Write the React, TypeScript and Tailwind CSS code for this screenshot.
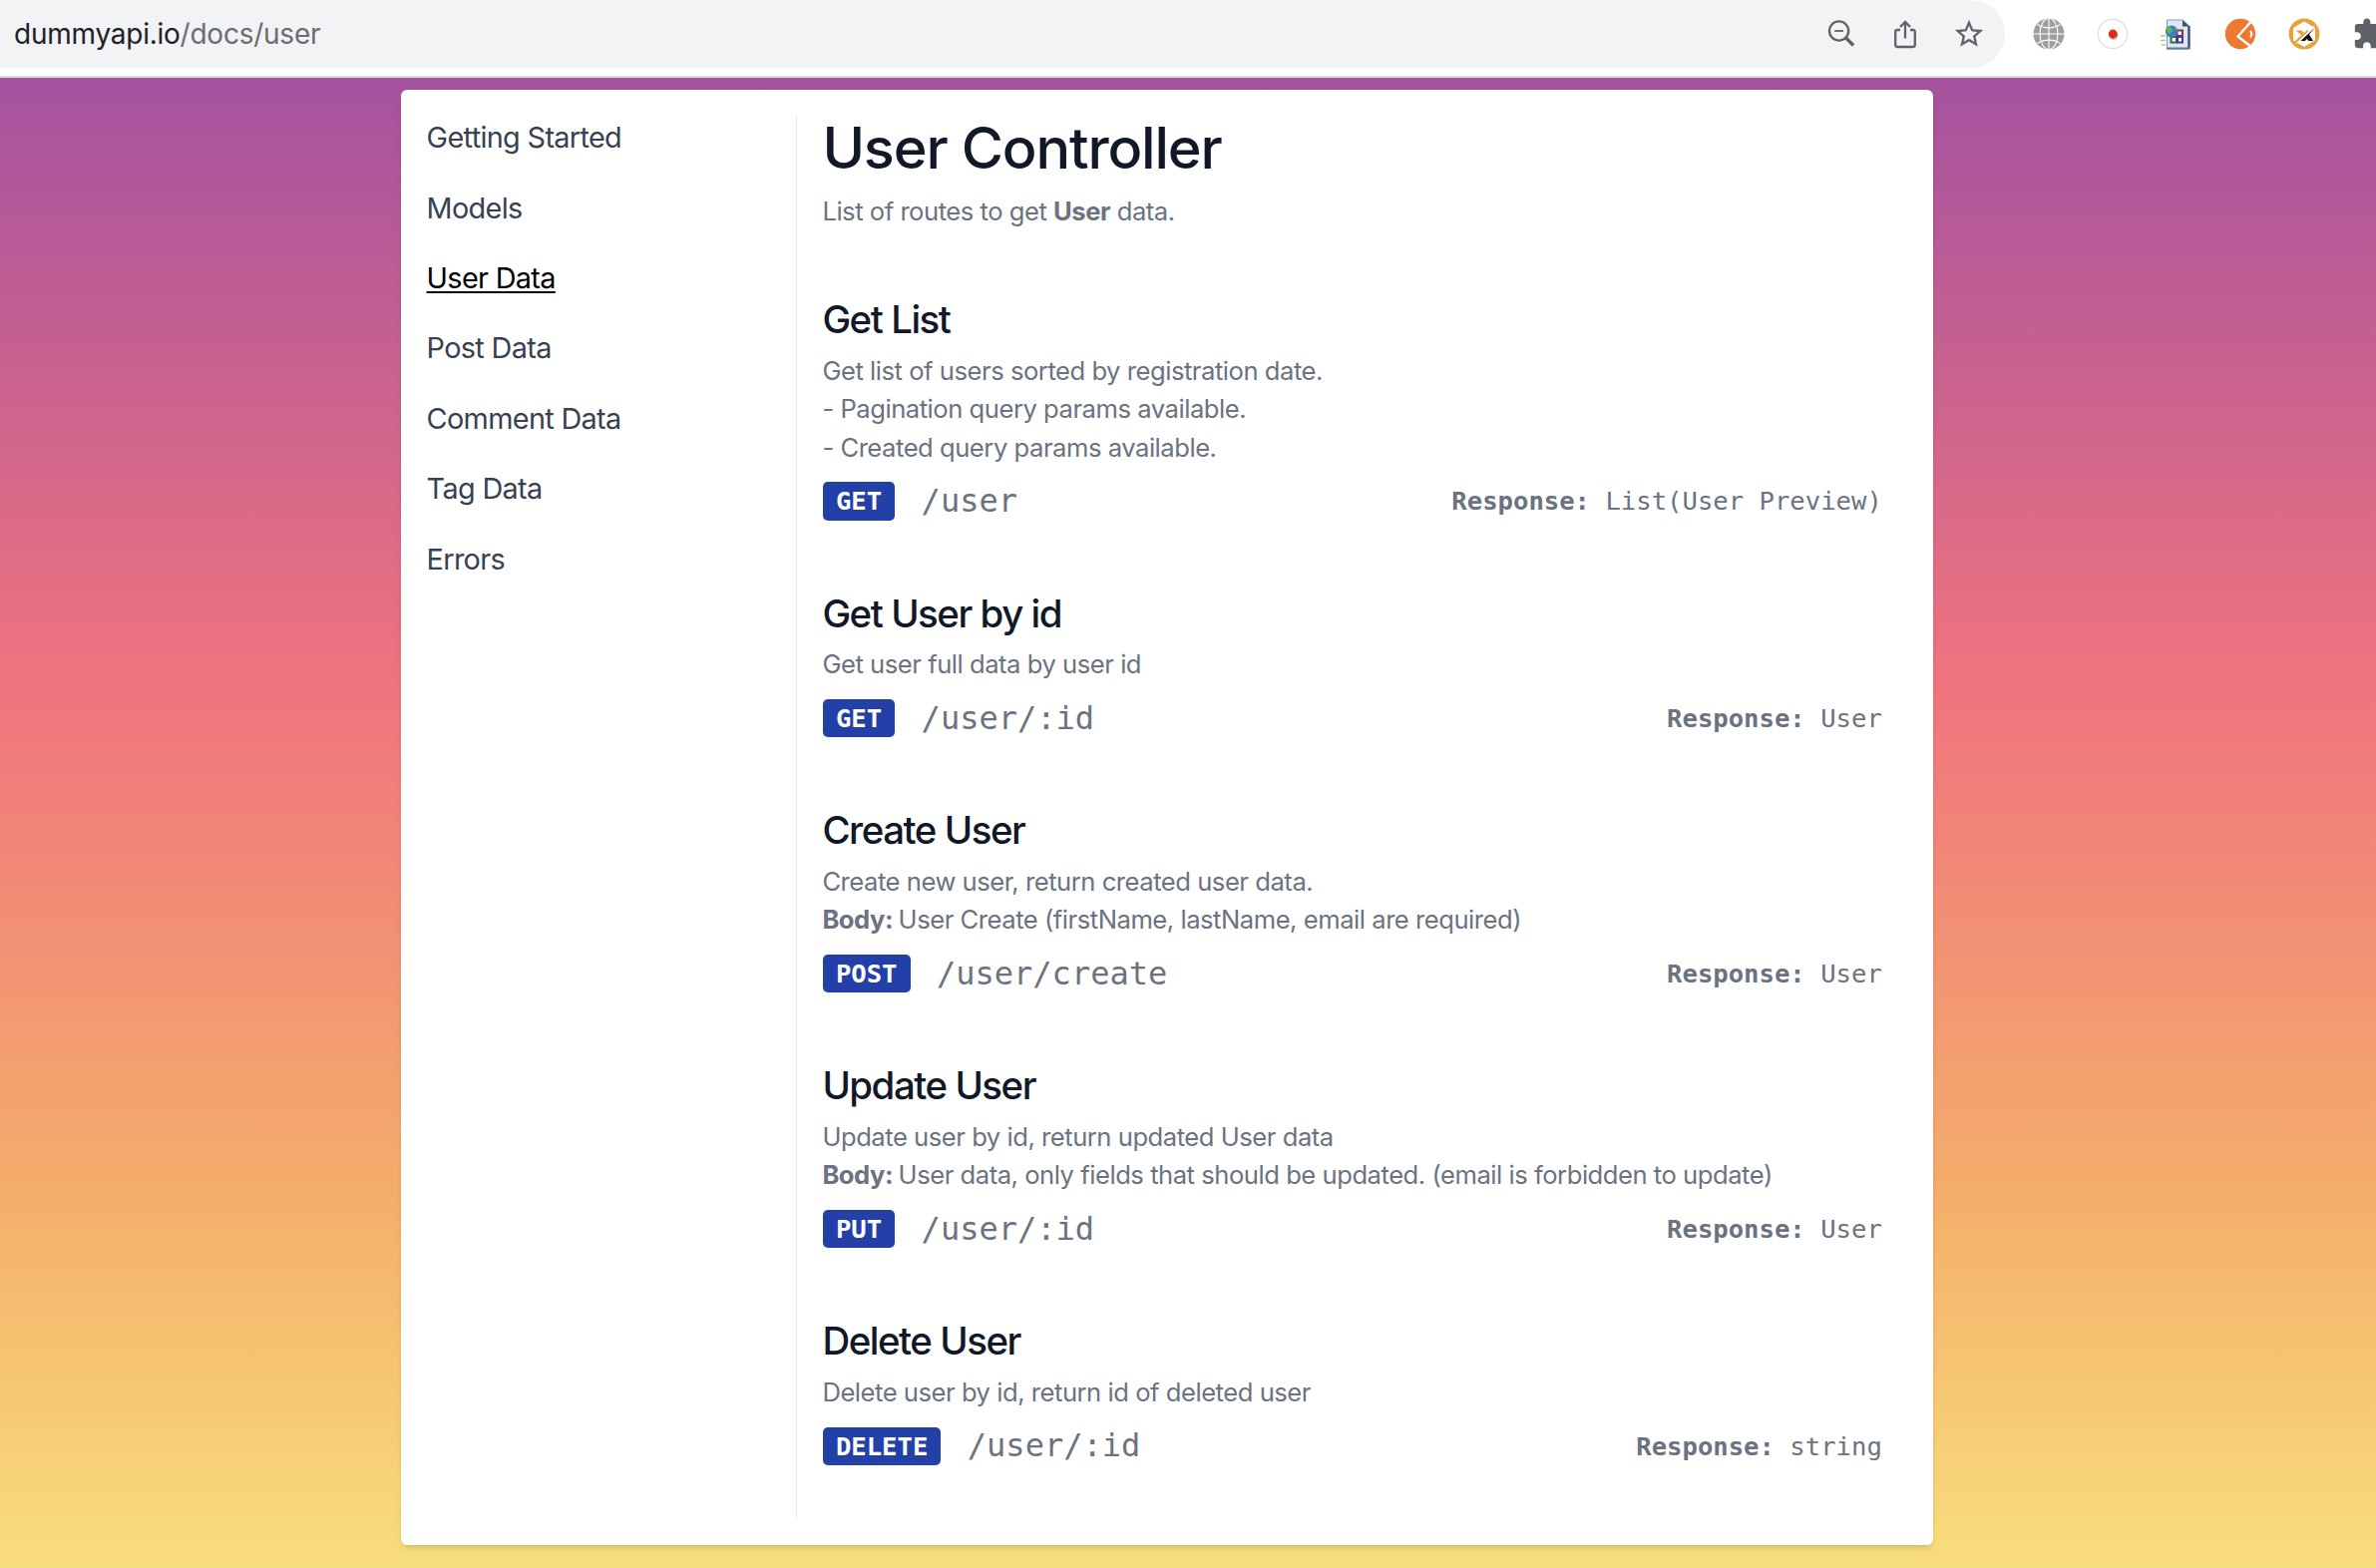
import React from "react";

const nav = ["Getting Started", "Models", "User Data", "Post Data", "Comment Data", "Tag Data", "Errors"];

type Route = {
  title: string;
  lines: { label?: string; text: string }[];
  method: string;
  path: string;
  response: string;
};

const routes: Route[] = [
  {
    title: "Get List",
    lines: [
      { text: "Get list of users sorted by registration date." },
      { text: "- Pagination query params available." },
      { text: "- Created query params available." },
    ],
    method: "GET",
    path: "/user",
    response: "List(User Preview)",
  },
  {
    title: "Get User by id",
    lines: [{ text: "Get user full data by user id" }],
    method: "GET",
    path: "/user/:id",
    response: "User",
  },
  {
    title: "Create User",
    lines: [
      { text: "Create new user, return created user data." },
      { label: "Body:", text: "User Create (firstName, lastName, email are required)" },
    ],
    method: "POST",
    path: "/user/create",
    response: "User",
  },
  {
    title: "Update User",
    lines: [
      { text: "Update user by id, return updated User data" },
      { label: "Body:", text: "User data, only fields that should be updated. (email is forbidden to update)" },
    ],
    method: "PUT",
    path: "/user/:id",
    response: "User",
  },
  {
    title: "Delete User",
    lines: [{ text: "Delete user by id, return id of deleted user" }],
    method: "DELETE",
    path: "/user/:id",
    response: "string",
  },
];

function ZoomOutIcon() {
  return (
    <svg width="32" height="32" viewBox="0 0 32 32" fill="none" stroke="#5f6368">
      <circle cx="12.6" cy="13" r="9.6" strokeWidth="2.3" />
      <path d="M8.200 13h8.800" strokeWidth="1.8" />
      <path d="M19.600 20l7.500 7.500" strokeWidth="3.2" />
    </svg>
  );
}

function ShareIcon() {
  return (
    <svg width="32" height="32" viewBox="0 0 32 32" fill="none" stroke="#5f6368" strokeWidth="2.3">
      <path d="M11 12H8a1.8 1.8 0 0 0-1.8 1.8v13.4A1.8 1.8 0 0 0 8 29h16a1.8 1.8 0 0 0 1.8-1.8V13.800A1.800 1.800 0 0 0 24 12h-3" />
      <path d="M16 20.500V4.500M11 9l5-5 5 5" />
    </svg>
  );
}

function StarIcon() {
  return (
    <svg width="34" height="34" viewBox="0 0 24 24" fill="#5f6368">
      <path d="M22 9.240l-7.190-.620L12 2 9.190 8.630 2 9.240l5.460 4.730L5.820 21 12 17.270 18.180 21l-1.630-7.030L22 9.240zM12 15.400l-3.760 2.270 1-4.280-3.320-2.880 4.380-.380L12 6.100l1.710 4.040 4.380.380-3.320 2.880 1 4.280L12 15.400z" />
    </svg>
  );
}

function GlobeIcon() {
  return (
    <svg width="32" height="32" viewBox="0 0 32 32" fill="none">
      <circle cx="16" cy="16" r="15.500" fill="#9e9e9e" />
      <g stroke="#fff" strokeWidth="1.100">
        <path d="M16 0v32M0 16h32" />
        <ellipse cx="16" cy="16" rx="9" ry="15.500" />
        <path d="M4.500 6.500c7 4.500 16 4.500 23 0M4.500 25.500c7-4.500 16-4.500 23 0" />
      </g>
    </svg>
  );
}

function RecordIcon() {
  return (
    <svg width="32" height="32" viewBox="0 0 32 32" fill="none">
      <circle cx="16" cy="16" r="14.700" fill="#fff" stroke="#dedede" strokeWidth="1.200" />
      <circle cx="16.800" cy="17.200" r="4.600" fill="#b9a9a6" />
      <circle cx="16.200" cy="16" r="4.400" fill="#e42a1d" />
    </svg>
  );
}

function SheetIcon() {
  return (
    <svg width="32" height="32" viewBox="0 0 32 32" fill="none">
      <path d="M6.500 2h16l6 6v23h-22z" fill="#dde7f4" stroke="#8497b8" strokeWidth="1" />
      <path d="M28.500 8v23" stroke="#35507f" strokeWidth="2.400" />
      <path d="M6 30.500h23" stroke="#5f779f" strokeWidth="2" />
      <path d="M22 2v6.500h7z" fill="#3d506f" />
      <g fill="#fff" strokeWidth="2">
        <path d="M16.500 12.500h5.500v5.500h-5.500z" stroke="#8d2a45" />
        <path d="M10.500 19H16v5.500h-5.500z" stroke="#2f7040" />
        <path d="M17 19h5v5.500h-5z" stroke="#4b3596" />
      </g>
      <circle cx="11" cy="13.500" r="6" fill="#3f78d8" />
      <path d="M5.500 10c3-3 5-2 5 0s3 1 2 3-3 1-3 4c-2-2-4-4-4-7zM14 9l3 2-1 3z" fill="#58b848" />
      <path d="M0 18h5M0 22.500h5M1 27h4" stroke="#b9c08d" strokeWidth="1.400" />
    </svg>
  );
}

function OrangeIcon() {
  return (
    <svg width="32" height="32" viewBox="0 0 32 32" fill="none">
      <circle cx="16" cy="16" r="15.200" fill="#ee7a30" />
      <path d="M26.500 4L13.500 18.500 27 29" stroke="#fff" strokeWidth="2.300" />
      <path d="M26 13c1.500 1.800 1.500 4.500 0 6.300" stroke="#fff" strokeWidth="2" />
    </svg>
  );
}

function HexIcon() {
  return (
    <svg width="32" height="32" viewBox="0 0 32 32" fill="none">
      <circle cx="16" cy="16" r="15.400" fill="#e9a13b" />
      <path d="M16 3.500l11 6.500v12.500L16 29 5 22.500V10z" fill="#fff" />
      <path d="M8 12.500h5.500l2.500 2.500 2.500-2.500H21L6.500 26.500 5 25l8-7.500z" fill="#e9a13b" />
      <path d="M27.500 9L12.500 23H17l1.500-2 2 2H25l-4-6.500z" fill="#111" />
      <path d="M26.500 8L8 26" stroke="#fff" strokeWidth="0.900" />
    </svg>
  );
}

function PuzzleIcon() {
  return (
    <svg width="34" height="34" viewBox="0 0 24 24" fill="#5f6368">
      <path d="M20.500 11H19V7c0-1.100-.900-2-2-2h-4V3.500C13 2.120 11.880 1 10.500 1S8 2.120 8 3.500V5H4c-1.100 0-1.990.900-1.990 2v3.800H3.500c1.490 0 2.700 1.210 2.700 2.700s-1.210 2.700-2.700 2.700H2V20c0 1.100.900 2 2 2h3.800v-1.500c0-1.490 1.210-2.700 2.700-2.700s2.700 1.210 2.700 2.700V22H17c1.100 0 2-.900 2-2v-4h1.500c1.380 0 2.500-1.120 2.500-2.500S21.880 11 20.500 11z" />
    </svg>
  );
}

function Toolbar() {
  return (
    <header className="flex h-[78px] w-full overflow-hidden border-b-2 border-[#dadce0] bg-white">
      <div className="flex h-[68px] w-[2010px] shrink-0 items-center rounded-r-full bg-[#f1f3f4] pl-[14px]">
        <p className="flex-1 text-[28px] tracking-[-0.24px] text-[#6b6d70]">
          <span className="text-[#202124]">dummyapi.io</span>/docs/user
        </p>
        <div className="mr-[19px] flex items-center gap-[31px]">
          <ZoomOutIcon />
          <ShareIcon />
          <StarIcon />
        </div>
      </div>
      <div className="ml-[27.500px] flex h-[68px] shrink-0 items-center gap-[32px]">
        <GlobeIcon />
        <RecordIcon />
        <SheetIcon />
        <OrangeIcon />
        <HexIcon />
        <PuzzleIcon />
      </div>
    </header>
  );
}

function RouteSection({ route }: { route: Route }) {
  return (
    <section>
      <h2 className="mb-[6.4px] text-[38.4px] leading-[51.2px] font-[530] tracking-[-1.45px] text-[#111827]">
        {route.title}
      </h2>
      <div className="mb-[12px]">
        {route.lines.map((line) => (
          <p key={line.text}>
            {line.label && <strong className="font-bold">{line.label} </strong>}
            {line.text}
          </p>
        ))}
      </div>
      <div className="mb-[0.8px] flex h-[44.8px] items-center font-['DejaVu_Sans_Mono',monospace] tracking-normal">
        <span className="ml-[0.5px] rounded-[5px] bg-[#2340a8] px-[13px] font-bold text-white">{route.method}</span>
        <span className="ml-[26.500px] flex-1 text-[32px] leading-[44.8px]">{route.path}</span>
        <span>
          <strong className="font-bold">Response:</strong> {route.response}
        </span>
      </div>
    </section>
  );
}

export default function App() {
  return (
    <div className="flex h-[1572px] w-[2382px] flex-col overflow-hidden bg-white font-['Inter',sans-serif]">
      <Toolbar />
      <div className="flex flex-1 items-start bg-[linear-gradient(to_bottom,#a4529f_0%,#f0747e_41%,#f4af6a_75.500%,#f8de7c_100%)] pt-3 pl-[402px]">
        <main className="flex h-[1459px] w-[1536px] rounded-[6.4px] bg-white p-[25.6px] shadow-md">
          <nav className="flex w-[371.2px] shrink-0 flex-col items-start gap-[25.6px] border-r border-[#e5e7eb] pt-[0.600px] text-[28.8px] leading-[44.8px] tracking-[-0.65px] text-[#374151]">
            {nav.map((item) => (
              <a
                key={item}
                className={item === "User Data" ? "text-black underline decoration-2 underline-offset-[3px]" : ""}
              >
                {item}
              </a>
            ))}
          </nav>
          <article className="flex-1 px-[25.6px] text-[25.6px] leading-[38.4px] tracking-[-0.47px] text-[#6b7280]">
            <h1 className="mb-[13.6px] text-[57.6px] leading-[64px] font-[530] tracking-[-1.15px] text-[#111827]">
              User Controller
            </h1>
            <p>
              List of routes to get <strong className="font-bold">User</strong> data.
            </p>
            <div className="mt-[63.800px] flex flex-col gap-16">
              {routes.map((route) => (
                <RouteSection key={route.title} route={route} />
              ))}
            </div>
          </article>
        </main>
      </div>
    </div>
  );
}
